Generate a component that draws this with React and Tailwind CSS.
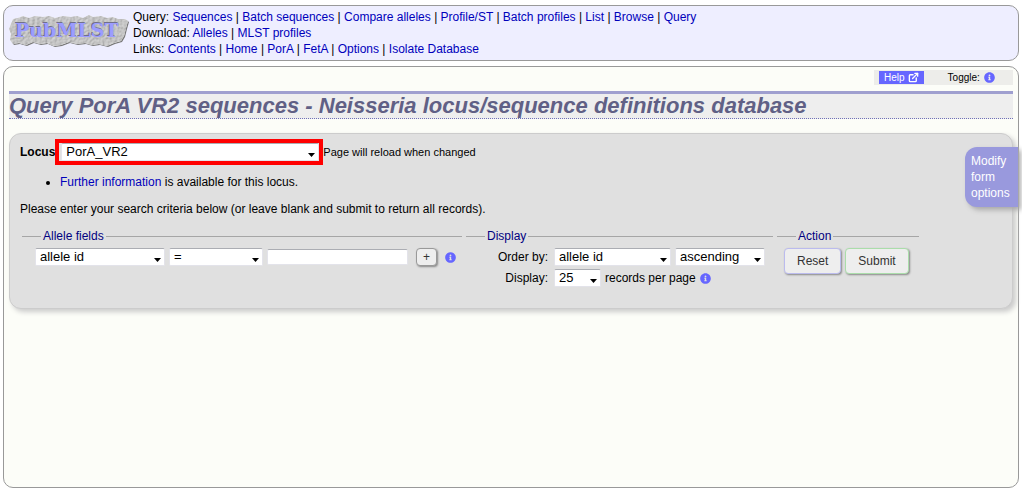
import React from 'react';
import { FaInfoCircle } from 'react-icons/fa';
import { FiExternalLink } from 'react-icons/fi';
import clsx from 'clsx';

const menu = [
  {
    label: 'Query',
    links: [
      'Sequences',
      'Batch sequences',
      'Compare alleles',
      'Profile/ST',
      'Batch profiles',
      'List',
      'Browse',
      'Query',
    ],
  },
  { label: 'Download', links: ['Alleles', 'MLST profiles'] },
  {
    label: 'Links',
    links: ['Contents', 'Home', 'PorA', 'FetA', 'Options', 'Isolate Database'],
  },
];

const stonePath =
  'M4 5 9 4 14 2 20 4 26 2 34 3 40 2 46 4 54 2 62 3 68 2 74 4 80 1 84 3 92 2 98 4 104 3 109 5 116 5 119 7 117 14 115 22 112 27 105 29 98 32 90 30 83 31 76 29 68 30 60 28 52 31 45 32 38 29 31 30 24 28 17 31 10 29 4 30 1 26 2 20 0 15 2 10Z';

const Logo = () => (
  <svg width="120" height="34" viewBox="0 0 120 34" role="img" aria-label="PubMLST">
    <defs>
      <filter id="stone" x="-5%" y="-10%" width="110%" height="120%" colorInterpolationFilters="sRGB">
        <feTurbulence type="fractalNoise" baseFrequency="0.4" numOctaves="2" seed="4" result="noise" />
        <feDiffuseLighting in="noise" lightingColor="#ffffff" surfaceScale="0.7" result="light">
          <feDistantLight azimuth="225" elevation="65" />
        </feDiffuseLighting>
        <feComposite in="light" in2="SourceGraphic" operator="in" result="rough" />
        <feBlend in="rough" in2="SourceGraphic" mode="multiply" />
      </filter>
    </defs>
    <path d={stonePath} fill="#777777" transform="translate(1 1)" />
    <path d={stonePath} fill="#d9d9d9" filter="url(#stone)" />
    <g className="font-['DejaVu_Serif',serif] text-[19px] font-bold">
      <text x="5" y="22" fill="#70708c" aria-hidden="true">
        PubMLST
      </text>
      <text x="6" y="23" fill="#9c9cff">
        PubMLST
      </text>
    </g>
  </svg>
);

const Info = ({ label }) => (
  <a href="#info" aria-label={label} className="text-[#6666ff]">
    <FaInfoCircle size={11} />
  </a>
);

const Select = ({ label, id, options, className }) => (
  <span className={clsx('relative block', className)}>
    <select
      id={id}
      aria-label={label}
      className="block h-[18px] w-full appearance-none rounded-xs border border-[#e3e3ea] border-t-[#abadb3] bg-white pr-4 pl-1 text-[13px] leading-4 text-black"
    >
      {options.map((option) => (
        <option key={option}>{option}</option>
      ))}
    </select>
    <svg className="pointer-events-none absolute right-1 bottom-1 h-1 w-[7px]" viewBox="0 0 7 4">
      <path d="M0 0h7L3.5 4z" fill="#000" />
    </svg>
  </span>
);

const Group = ({ title, className, children }) => (
  <fieldset className={clsx('border-t border-[#a6a6a6]', className)}>
    <legend className="ml-[19px] px-[2px] leading-4 text-[#000080]">{title}</legend>
    {children}
  </fieldset>
);

const actionButton =
  'h-[26px] rounded-sm border bg-[#eeeeee] px-3 text-[12px] leading-4 text-[#333333] shadow-[1px_1px_2px_#888888]';

const App = () => (
  <div className="px-[3px] pt-[5px] pb-[10px] font-['Liberation_Sans',Arial,sans-serif] text-[12px] leading-4 text-black">
    <header className="flex rounded-[10px] border border-[#999999] bg-[#eeeeff] py-[3px] pl-[5px]">
      <a href="#home" className="mt-[5px] mr-[4px]">
        <Logo />
      </a>
      <nav>
        {menu.map(({ label, links }) => (
          <div key={label}>
            {label}:{' '}
            {links.map((link, i) => (
              <React.Fragment key={link}>
                {i > 0 && ' | '}
                <a href="#menu" className="text-[#0000bb]">
                  {link}
                </a>
              </React.Fragment>
            ))}
          </div>
        ))}
      </nav>
    </header>

    <main className="relative mt-[5px] min-h-[calc(100vh-76px)] rounded-[10px] border border-[#999999] bg-[#fcfdf8] px-[5px] pt-[3px]">
      <div className="ml-auto flex h-[15px] w-[139px] items-center bg-[#ededea] pl-[5px] text-[10px]">
        <a href="#help" className="flex h-[13px] items-center gap-[3px] bg-[#6666ff] px-[5px] text-white">
          Help <FiExternalLink size={11} strokeWidth={3} />
        </a>
        <span className="mr-1 ml-6">Toggle:</span>
        <Info label="Toggle tooltips" />
      </div>

      <h1 className="mt-[6px] border-t-[3px] border-b border-t-[#9f9fcf] border-b-[#7070b8] bg-[#eeeeee] text-[22px] leading-6 font-bold text-[#606085] italic [border-bottom-style:dotted]">
        Query PorA VR2 sequences - Neisseria locus/sequence definitions database
      </h1>

      <form
        className="mt-[14px] rounded-[12px] border border-[#cccccc] bg-[#e0e0e0] px-[10px] pt-[5px] pb-[21px] shadow-[3px_3px_5px_#cccccc]"
        onSubmit={(e) => e.preventDefault()}
      >
        <div className="flex items-center">
          <label htmlFor="locus" className="font-bold">
            Locus
          </label>
          <div className="w-[268px] border-4 border-[#ff0000] pl-[2px]">
            <Select id="locus" options={['PorA_VR2']} />
          </div>
          <span className="text-[11px]">Page will reload when changed</span>
        </div>

        <ul className="mt-[9px] list-disc pl-10">
          <li>
            <a href="#locus-info" className="text-[#0000bb]">
              Further information
            </a>{' '}
            is available for this locus.
          </li>
        </ul>
        <p className="mt-[11px]">
          Please enter your search criteria below (or leave blank and submit to return all records).
        </p>

        <div className="mt-[11px] ml-[2px] flex flex-wrap gap-1">
          <Group title="Allele fields" className="w-[440px]">
            <div className="mt-1 flex items-center gap-1 pl-[13px]">
              <Select label="Field" options={['allele id']} className="w-[130px]" />
              <Select label="Operator" options={['=']} className="w-[94px]" />
              <input
                type="text"
                aria-label="Value"
                className="h-4 w-[141px] rounded-xs border border-[#e3e3ea] border-t-[#abadb3] bg-white px-1"
              />
              <button
                type="button"
                aria-label="Add field"
                className="mx-1 h-[18px] w-[21px] rounded-sm border border-[#999999] bg-[#eeeeee] leading-3 text-[#333333] shadow-[1px_1px_2px_#888888]"
              >
                +
              </button>
              <Info label="Field help" />
            </div>
          </Group>

          <Group title="Display" className="w-[307px]">
            <div className="mt-1 flex items-center gap-1">
              <label htmlFor="order" className="w-[84px] pr-[2px] text-right">
                Order by:
              </label>
              <Select id="order" options={['allele id']} className="w-[117px]" />
              <Select label="Direction" options={['ascending']} className="w-[90px]" />
            </div>
            <div className="mt-[3px] flex items-center gap-1">
              <label htmlFor="page-size" className="w-[84px] pr-[2px] text-right">
                Display:
              </label>
              <Select id="page-size" options={['25', '50', '100']} className="w-[47px]" />
              <span>records per page</span>
              <Info label="Records per page help" />
            </div>
          </Group>

          <Group title="Action" className="w-[142px]">
            <div className="mt-1 flex gap-1 pl-[7px]">
              <button type="reset" className={clsx(actionButton, 'border-[#bbbbee]')}>
                Reset
              </button>
              <button type="submit" className={clsx(actionButton, 'border-[#aaddaa]')}>
                Submit
              </button>
            </div>
          </Group>
        </div>
      </form>

      <button
        type="button"
        className="absolute top-20 right-0 w-[53px] rounded-l-[12px] bg-[#9999dd] py-[6px] pl-[6px] text-left text-white shadow-[3px_3px_5px_#aaaaaa]"
      >
        Modify
        <br />
        form
        <br />
        options
      </button>
    </main>
  </div>
);

export default App;
